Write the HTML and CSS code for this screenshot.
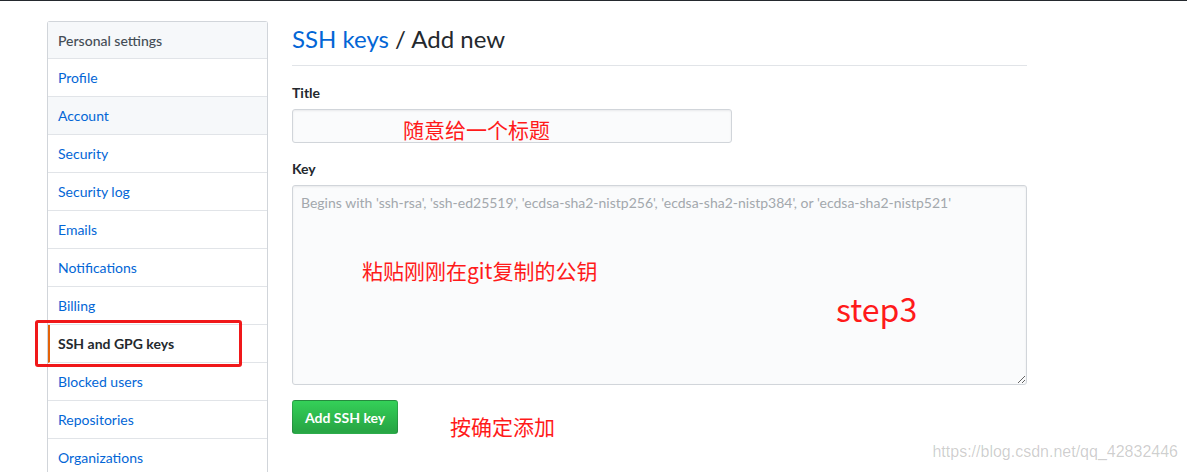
FILE: index.html
```html
<!DOCTYPE html>
<html lang="zh-CN">
<head>
    <meta charset="UTF-8">
    <title>SSH keys / Add new</title>
    <link rel="stylesheet" href="styles.css">
</head>
<body>
    <div class="page">
        <nav class="menu">
            <div class="menu-heading">Personal settings</div>
            <a class="menu-item" href="#">Profile</a>
            <a class="menu-item hover" href="#">Account</a>
            <a class="menu-item" href="#">Security</a>
            <a class="menu-item" href="#">Security log</a>
            <a class="menu-item" href="#">Emails</a>
            <a class="menu-item" href="#">Notifications</a>
            <a class="menu-item" href="#">Billing</a>
            <a class="menu-item selected" href="#">SSH and GPG keys
                <span class="mark-box"></span>
            </a>
            <a class="menu-item" href="#">Blocked users</a>
            <a class="menu-item" href="#">Repositories</a>
            <a class="menu-item" href="#">Organizations</a>
        </nav>

        <main class="content">
            <h2 class="subhead"><a href="#">SSH keys</a> / Add new</h2>

            <form class="key-form">
                <div class="form-group">
                    <label for="title">Title</label>
                    <div class="field-wrap">
                        <input type="text" id="title" class="input title-input">
                        <span class="note note-title">随意给一个标题</span>
                    </div>
                </div>
                <div class="form-group">
                    <label for="key">Key</label>
                    <div class="field-wrap">
                        <textarea id="key" class="input key-input" placeholder="Begins with 'ssh-rsa', 'ssh-ed25519', 'ecdsa-sha2-nistp256', 'ecdsa-sha2-nistp384', or 'ecdsa-sha2-nistp521'"></textarea>
                        <span class="note note-key">粘贴刚刚在git复制的公钥</span>
                        <span class="note note-step">step3</span>
                    </div>
                </div>
                <div class="actions">
                    <button type="button" class="btn-primary">Add SSH key</button>
                    <span class="note note-btn">按确定添加</span>
                </div>
            </form>
        </main>
    </div>
    <div class="watermark">https://blog.csdn.net/qq_42832446</div>
</body>
</html>
```

FILE: styles.css
```css
:root {
    --text: #24292e;
    --link: #0366d6;
    --border: #e1e4e8;
    --border-dark: #d1d5da;
    --bg-light: #f6f8fa;
    --note: #ff1a1a;
}

* {
    margin: 0;
    padding: 0;
    box-sizing: border-box;
}

body {
    font-family: Lato, "Liberation Sans", sans-serif;
    font-size: 14px;
    line-height: 1.5;
    color: var(--text);
    background: #fff;
    height: 472px;
    overflow: hidden;
    position: relative;
}

a {
    color: var(--link);
    text-decoration: none;
}

.page {
    display: flex;
    align-items: flex-start;
    gap: 24px;
    border-top: 1px solid var(--text);
    padding: 20px 0 0 47px;
}

/* Sidebar menu */
.menu {
    width: 221px;
    border: 1px solid var(--border-dark);
    border-bottom: none;
    border-radius: 3px 3px 0 0;
    display: flex;
    flex-direction: column;
}

.menu-heading {
    height: 37px;
    display: flex;
    align-items: center;
    padding: 0 10px;
    background: var(--bg-light);
    border-bottom: 1px solid var(--border);
    color: #444d56;
    font-weight: 500;
}

.menu-item {
    position: relative;
    height: 38px;
    display: flex;
    align-items: center;
    padding: 0 10px;
    border-bottom: 1px solid var(--border);
}

.menu-item.hover {
    background: var(--bg-light);
}

.menu-item.selected {
    color: var(--text);
    font-weight: 700;
    border-left: 2px solid #e36209;
    padding-left: 8px;
}

.mark-box {
    position: absolute;
    left: -15px;
    top: -5px;
    width: 207px;
    height: 47px;
    border: 3px solid #f0181a;
    border-radius: 3px;
}

/* Main content */
.content {
    width: 735px;
}

.subhead {
    font-size: 24px;
    font-weight: 400;
    line-height: 36px;
    padding-bottom: 8px;
    margin-bottom: 16px;
    border-bottom: 1px solid var(--border);
}

.form-group {
    margin-bottom: 15px;
}

.form-group label {
    display: block;
    font-weight: 700;
    margin-bottom: 6px;
}

.field-wrap {
    position: relative;
}

.input {
    display: block;
    font-family: inherit;
    font-size: 14px;
    background: #fafbfc;
    border: 1px solid var(--border-dark);
    border-radius: 3px;
    box-shadow: inset 0 1px 2px rgba(27, 31, 35, 0.075);
    color: var(--text);
}

.title-input {
    width: 440px;
    height: 34px;
    padding: 6px 8px;
}

.key-input {
    width: 735px;
    height: 200px;
    padding: 8px;
    resize: vertical;
}

.key-input::placeholder {
    color: #a3a8ad;
}

.actions {
    position: relative;
}

.btn-primary {
    height: 34px;
    padding: 0 12px;
    font-family: inherit;
    font-size: 14px;
    font-weight: 700;
    color: #fff;
    background: linear-gradient(-180deg, #34d058 0%, #28a745 90%);
    border: 1px solid rgba(27, 31, 35, 0.2);
    border-radius: 3px;
    cursor: pointer;
}

/* Red annotations over the form */
.note {
    position: absolute;
    color: var(--note);
    font-family: "Noto Sans CJK SC", sans-serif;
    font-size: 21px;
    line-height: 1;
    white-space: nowrap;
}

.note-title {
    left: 111px;
    top: 10px;
}

.note-key {
    left: 70px;
    top: 75px;
}

.note-step {
    left: 544px;
    top: 107px;
    font-size: 32px;
}

.note-btn {
    left: 158px;
    top: 16px;
}

.watermark {
    position: absolute;
    right: 9px;
    bottom: 8px;
    font-family: "Liberation Sans", sans-serif;
    font-size: 16px;
    color: rgba(0, 0, 0, 0.2);
}
```
